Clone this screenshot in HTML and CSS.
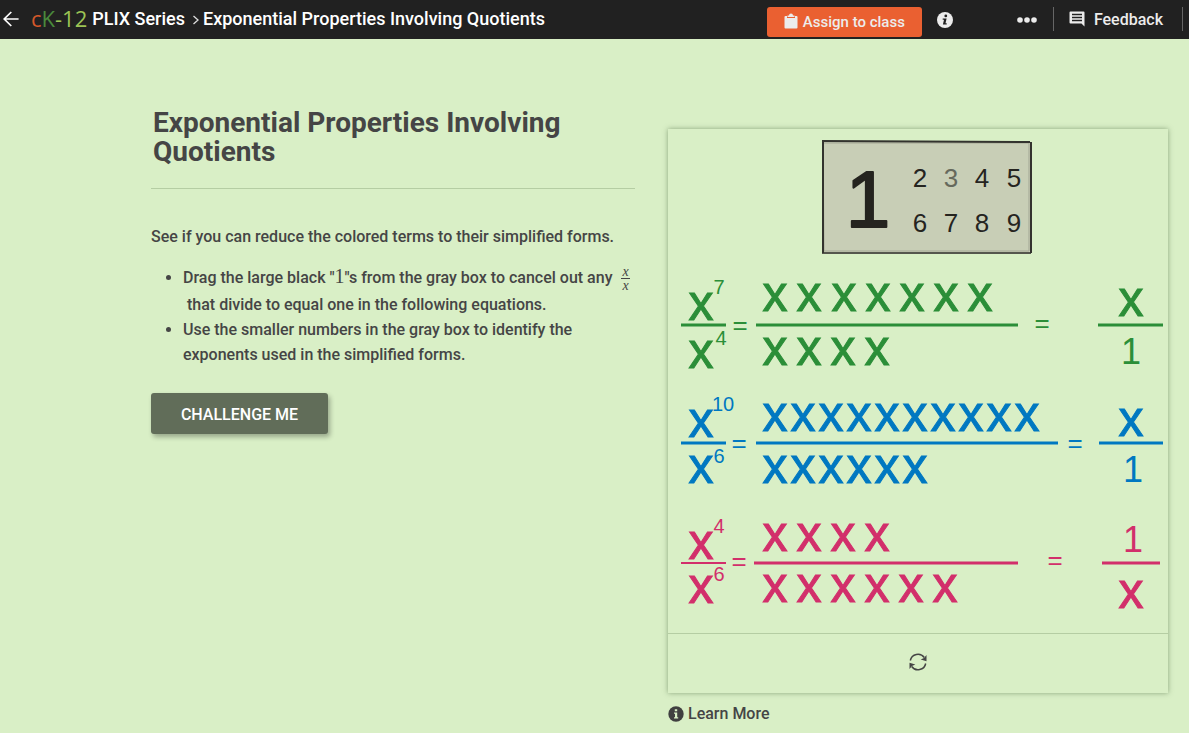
FILE: index.html
```html
<!DOCTYPE html>
<html lang="en">
<head>
<meta charset="utf-8">
<title>Exponential Properties Involving Quotients</title>
<link rel="stylesheet" href="styles.css">
</head>
<body>
<header class="topbar">
  <nav class="crumbs">
    <a class="back" href="#" aria-label="Back"><svg width="16" height="16" viewBox="0 0 16 16"><path d="M8.3 1 1.2 8l7.1 7M1.2 8H15.6" fill="none" stroke="#fff" stroke-width="1.7"/></svg></a>
    <a class="logo" href="#"><span class="logo-c">c</span><span class="logo-k">K</span><span class="logo-n">-12</span></a>
    <a class="crumb" href="#">PLIX Series</a>
    <svg class="chevron" width="8" height="10" viewBox="0 0 8 10"><path d="M1.5 1 6 5 1.5 9" fill="none" stroke="#ddd" stroke-width="1.3"/></svg>
    <span class="crumb">Exponential Properties Involving Quotients</span>
  </nav>
  <div class="tools">
    <button class="assign" type="button"><svg width="14" height="16" viewBox="0 0 14 16"><path d="M1.5 3H3V5h8V3h1.500a1 1 0 0 1 1 1v10.500a1 1 0 0 1-1 1h-11a1 1 0 0 1-1-1V4a1 1 0 0 1 1-1z" fill="#ececec"/><path d="M3.500 4V2.500H5A2 2 0 0 1 9 2.500h1.500V4z" fill="#ececec"/></svg>Assign to class</button>
    <button class="icon info" type="button" aria-label="Information"><svg width="16" height="16" viewBox="0 0 16 16"><circle cx="8" cy="8" r="8" fill="#ececec"/><circle cx="8.800" cy="3.900" r="1.400" fill="#212121"/><path d="M5.700 6.500h3.900L8.500 11.300h1.200v1.200H5.900l1.100-4.800H5.700z" fill="#212121"/></svg></button>
    <button class="icon more" type="button" aria-label="More"><svg width="20" height="6" viewBox="0 0 20 6"><g fill="#ececec"><circle cx="3" cy="3" r="2.800"/><circle cx="10" cy="3" r="2.800"/><circle cx="17" cy="3" r="2.800"/></g></svg></button>
    <button class="feedback" type="button"><svg width="16" height="16" viewBox="0 0 16 16"><path d="M1.500 0.500h13a1 1 0 0 1 1 1V15.500l-3-3h-11a1 1 0 0 1-1-1v-10a1 1 0 0 1 1-1z" fill="#ececec"/><path d="M3 3.500h10M3 6.500h10M3 9.500h10" stroke="#212121" stroke-width="1.300"/></svg>Feedback</button>
  </div>
</header>
<main class="page">
  <section class="intro">
    <h1>Exponential Properties Involving Quotients</h1>
    <p>See if you can reduce the colored terms to their simplified forms.</p>
    <ul>
      <li>Drag the large black "<span class="num">1</span>"s from the gray box to cancel out any <span class="frac"><i>x</i><i>x</i></span> &nbsp;that divide to equal one in the following equations.</li>
      <li>Use the smaller numbers in the gray box to identify the exponents used in the simplified forms.</li>
    </ul>
    <button class="challenge" type="button">CHALLENGE ME</button>
  </section>
  <section class="side">
    <div class="panel">
      <svg class="board" viewBox="0 0 500 504" role="img" aria-label="Fraction board">
        <rect x="155" y="12" width="207" height="112" fill="#c8ceb6"/>
        <path d="M155 14H361V122H156Z" class="bevel"/>
        <path d="M154 12 362 13" class="edge"/><path d="M154 124H363" class="edge soft"/><path d="M155 12V124M363 13V124" class="edge"/>
        <text class="big" x="200" y="98">1</text>
        <g class="digits">
          <text x="252 283 314 346" y="58">2<tspan class="faded">3</tspan>45</text>
          <text x="252 283 314 346" y="103">6789</text>
        </g>
        <g class="green">
          <path d="M13 196H58M88 196H350M430 196H495"/>
          <text class="x" x="33" y="191">x</text><text class="sup" x="51" y="165">7</text>
          <text class="x" x="33" y="239">x</text><text class="sup" x="53" y="216">4</text>
          <text class="eq" x="72" y="205">=</text>
          <text class="x" x="107 141 176 210 244 278 312" y="182">xxxxxxx</text>
          <text class="x" x="107 141 175 209" y="236">xxxx</text>
          <text class="eq" x="374" y="203">=</text>
          <text class="x" x="463" y="187">x</text><text class="one" x="463" y="235">1</text>
        </g>
        <g class="blue">
          <path d="M13 314H58M88 314H390M431 314H495"/>
          <text class="x" x="33" y="308">x</text><text class="sup" x="55" y="282">10</text>
          <text class="x" x="33" y="354">x</text><text class="sup" x="51" y="334">6</text>
          <text class="eq" x="71" y="323">=</text>
          <text class="x" x="107 135 163 191 219 247 275 303 331 359" y="302">xxxxxxxxxx</text>
          <text class="x" x="107 135 163 191 219 247" y="354">xxxxxx</text>
          <text class="eq" x="407" y="323">=</text>
          <text class="x" x="463" y="307">x</text><text class="one" x="465" y="353">1</text>
        </g>
        <g class="pink">
          <path class="thin" d="M13 434H58"/><path d="M86 434H350M434 434H492"/>
          <text class="x" x="33" y="430">x</text><text class="sup" x="51" y="404">4</text>
          <text class="x" x="33" y="474">x</text><text class="sup" x="51" y="452">6</text>
          <text class="eq" x="71" y="441">=</text>
          <text class="x" x="107 141 175 209" y="422">xxxx</text>
          <text class="x" x="107 141 175 209 243 277" y="473">xxxxxx</text>
          <text class="eq" x="387" y="440">=</text>
          <text class="one" x="465" y="423">1</text><text class="x" x="463" y="479">x</text>
        </g>
      </svg>
      <div class="controls">
        <button class="icon" type="button" aria-label="Reset"><svg width="18" height="18" viewBox="0 0 18 18"><g fill="none" stroke="#454545" stroke-width="1.500"><path d="M1.300 7.500A7.800 7.800 0 0 1 15.300 4.500M16.700 10.500A7.800 7.800 0 0 1 2.700 13.500"/></g><path d="M17.500 2v6.200l-5.800-1.600 3.300-1.500zM.5 16V9.800l5.800 1.600L3 12.900z" fill="#454545"/></svg></button>
      </div>
    </div>
    <a class="learn" href="#"><svg width="16" height="16" viewBox="0 0 16 16"><circle cx="8" cy="8" r="7.700" fill="#404040"/><path d="M6.800 3.200h2.400v2H6.800zM6 6.500h3.200v4.700h1v1.200H6v-1.200h1V7.700H6z" fill="#d9efc6"/></svg>Learn More</a>
  </section>
</main>
</body>
</html>
```
FILE: styles.css
```css
* { box-sizing: border-box; }
body {
  margin: 0;
  min-height: 100vh;
  background: #d9efc6;
  color: #454545;
  font-family: Roboto, "Liberation Sans", sans-serif;
  font-size: 16px;
}
svg { display: block; flex: none; }
button { border: 0; background: none; padding: 0; font: inherit; color: inherit; cursor: pointer; }
a { color: inherit; text-decoration: none; }

.topbar {
  display: flex;
  justify-content: space-between;
  height: 39px;
  background: #212121;
  color: #fff;
}
.crumbs { display: flex; align-items: center; padding: 0 0 2px 3px; font-size: 18px; font-weight: 500; }
.crumbs .crumb { white-space: nowrap; }
.logo { margin: 0 5px 0 12px; font-family: "Open Sans", sans-serif; font-size: 22px; font-weight: 400; line-height: 34px; padding-bottom: 2px; }
.logo-c { color: #d5582a; }
.logo-k { color: #4a8a3c; }
.logo-n { color: #9cc455; }
.chevron { margin: 2px 3px 0 7px; }

.tools { display: flex; align-items: center; color: #ececec; font-weight: 500; }
.assign {
  display: flex;
  align-items: center;
  justify-content: center;
  gap: 5px;
  width: 155px;
  height: 30px;
  margin: 5px 15px 0 0;
  border-radius: 3px;
  background: #ea6031;
  font-size: 15px;
}
.assign svg { margin-bottom: 3px; }
.more { margin-left: 64px; }
.feedback {
  display: flex;
  align-items: center;
  gap: 9px;
  height: 24px;
  margin: 0 6px 2px 16px;
  padding: 2px 19px 0 15px;
  border: solid #666;
  border-width: 0 1px;
}
.feedback svg { margin-bottom: 2px; }

.page {
  display: grid;
  grid-template-columns: 484fr 500fr;
  gap: 33px;
  padding: 0 21px 0 151px;
}
.intro { padding-top: 69px; font-weight: 500; }
h1 {
  margin: 0;
  padding: 0 2px 22px;
  border-bottom: 1px solid #b5cda3;
  font-size: 28px;
  font-weight: 700;
  line-height: 29px;
}
p { margin: 35px 0 0; line-height: 25px; }
ul { margin: 16px 0 0; padding-left: 32px; line-height: 25px; }
.num { font-family: "Liberation Serif", serif; font-size: 20px; font-weight: 400; line-height: 20px; }
.frac {
  display: inline-flex;
  flex-direction: column;
  margin-left: 5px;
  vertical-align: middle;
  font-family: "Liberation Serif", serif;
  font-size: 14px;
  font-weight: 400;
  line-height: 13px;
  text-align: center;
}
.frac i { padding: 0 1px; }
.frac i:first-child { border-bottom: 1px solid #454545; }
.challenge {
  width: 177px;
  height: 41px;
  margin-top: 26px;
  padding-top: 2px;
  border-radius: 3px;
  background: #616d59;
  box-shadow: 2px 3px 5px rgba(0, 0, 0, .3);
  color: #fff;
  font-weight: 500;
}

.side { padding-top: 90px; }
.panel { box-shadow: 0 0 5px rgba(60, 90, 50, .5); }
.board { width: 100%; height: auto; font-family: "Liberation Sans", Arial, sans-serif; text-anchor: middle; }
.edge { fill: none; stroke: #33332e; }
.edge.soft { stroke: #55564d; }
.bevel { fill: none; stroke: #a3a694; }
.big { font-size: 80px; fill: #25241f; stroke: #25241f; stroke-width: 2px; stroke-linejoin: round; }
.digits { font-size: 26px; fill: #25241f; stroke: none; }
.faded { fill: #66695c; }
.green { fill: #2b8e38; stroke: #2b8e38; }
.blue { fill: #0078c1; stroke: #0078c1; }
.pink { fill: #d22f6b; stroke: #d22f6b; }
.board path { stroke-width: 3; }
.board .edge, .board .thin { stroke-width: 2; }
.board .bevel { stroke-width: 1; }
.x { font-size: 50px; stroke-width: 1; }
.sup, .eq, .one { stroke-width: 0; }
.sup { font-size: 20px; }
.eq { font-size: 26px; }
.one { font-size: 36px; }
.controls { display: flex; align-items: center; justify-content: center; height: 60px; border-top: 1px solid #b5cda3; }
.controls .icon { margin-top: -3px; }
.learn { display: inline-flex; align-items: center; gap: 4px; margin-top: 12px; font-weight: 500; line-height: 18px; }
```
